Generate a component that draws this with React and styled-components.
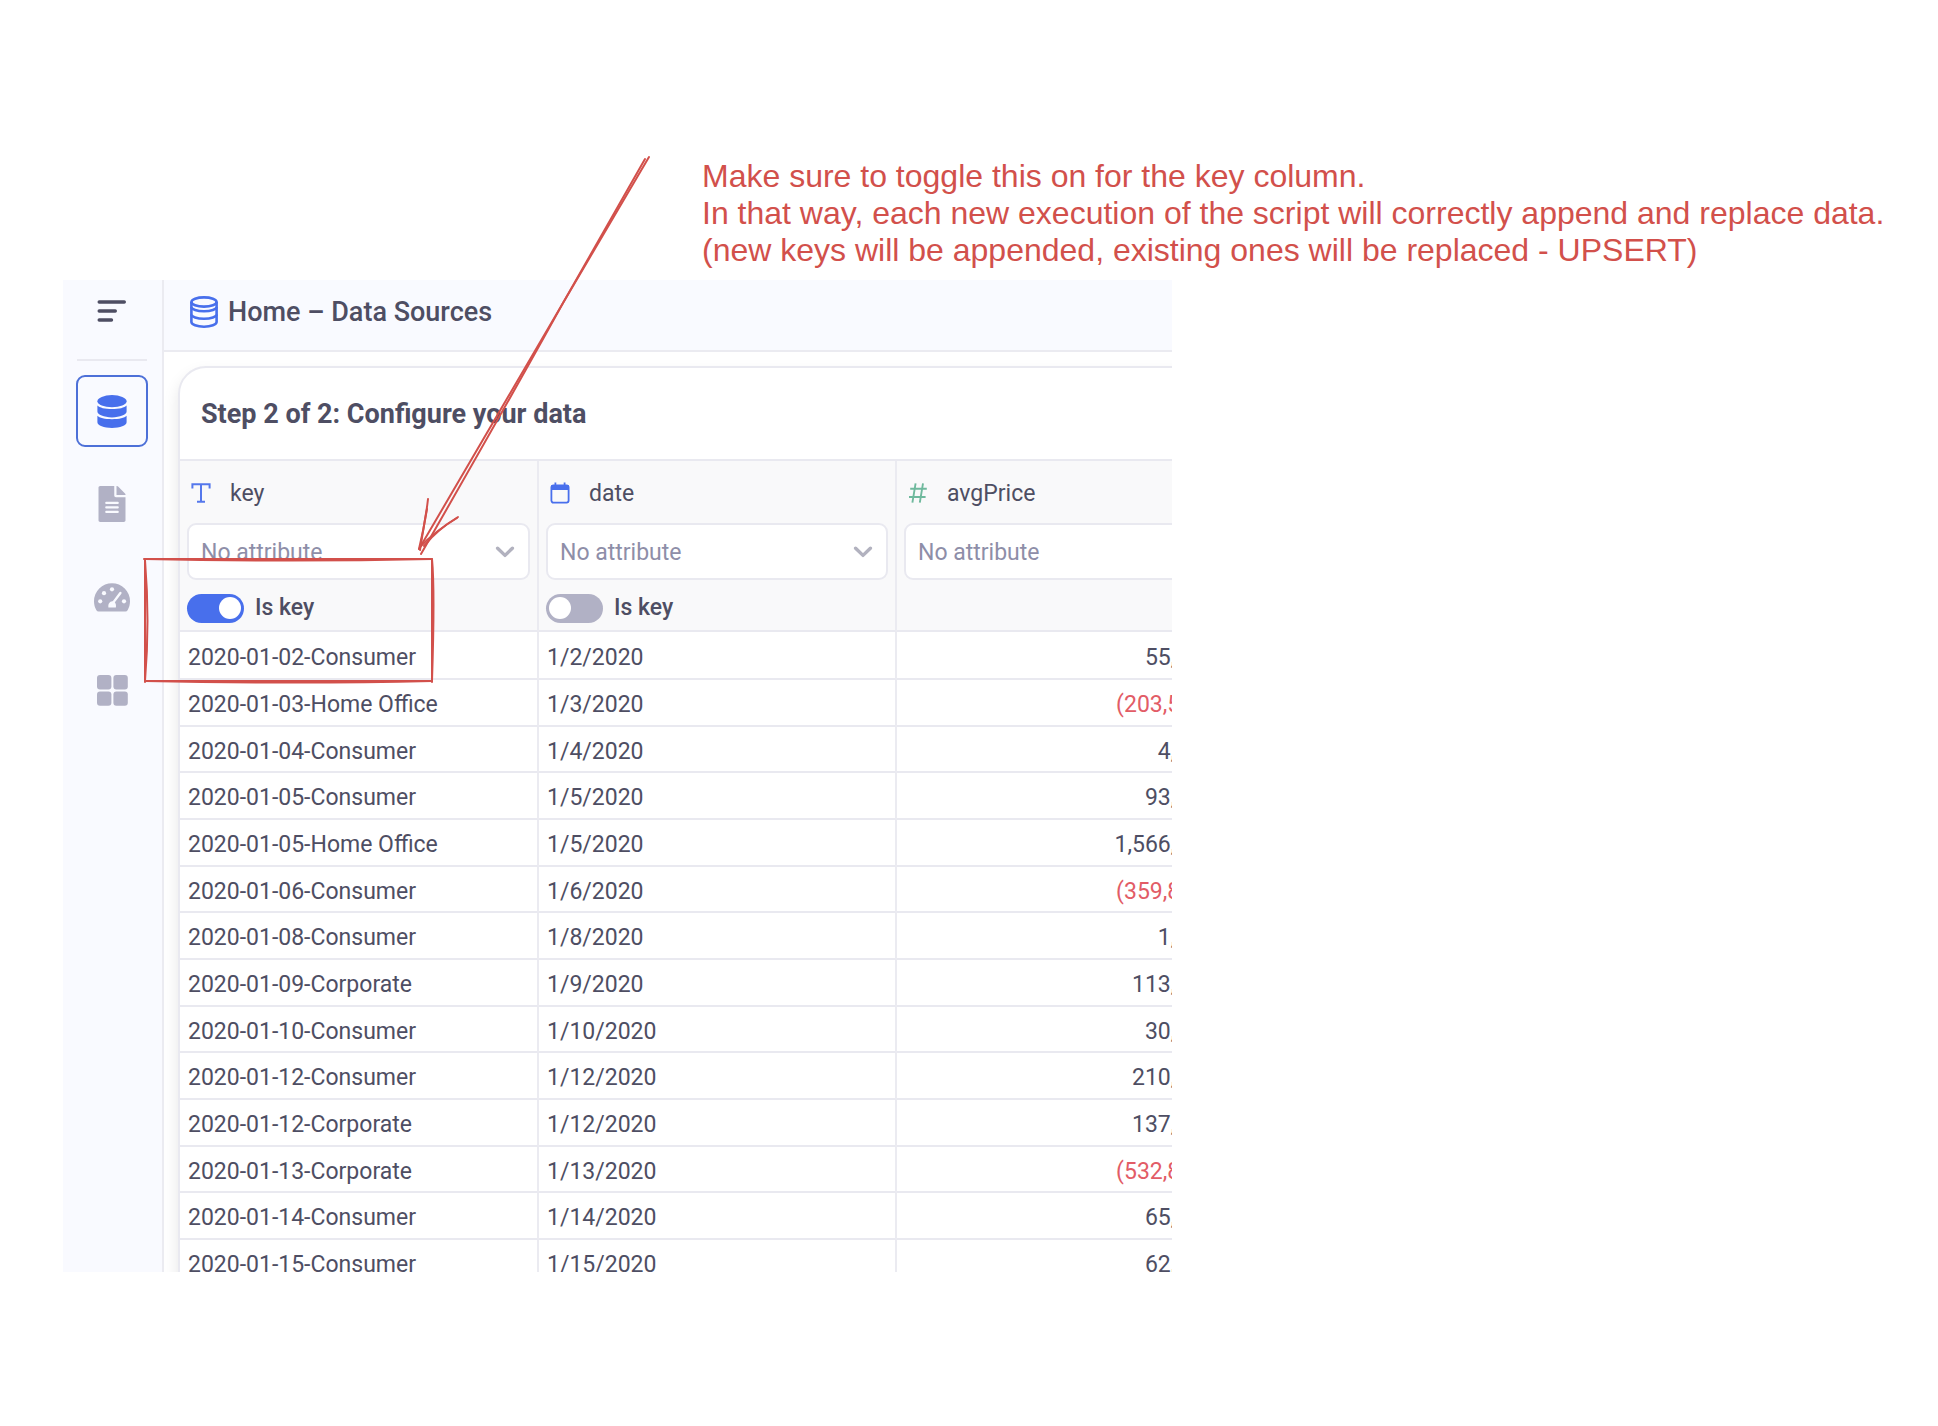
import React, { useState } from "react";
import styled, { createGlobalStyle } from "styled-components";
import { FaFileAlt } from "react-icons/fa";

const rows = [
  { key: "2020-01-02-Consumer", date: "1/2/2020", avgPrice: "55,210.40" },
  { key: "2020-01-03-Home Office", date: "1/3/2020", avgPrice: "(203,514.20)" },
  { key: "2020-01-04-Consumer", date: "1/4/2020", avgPrice: "4,620.00" },
  { key: "2020-01-05-Consumer", date: "1/5/2020", avgPrice: "93,408.60" },
  { key: "2020-01-05-Home Office", date: "1/5/2020", avgPrice: "1,566,204.80" },
  { key: "2020-01-06-Consumer", date: "1/6/2020", avgPrice: "(359,842.00)" },
  { key: "2020-01-08-Consumer", date: "1/8/2020", avgPrice: "1,204.60" },
  { key: "2020-01-09-Corporate", date: "1/9/2020", avgPrice: "113,620.40" },
  { key: "2020-01-10-Consumer", date: "1/10/2020", avgPrice: "30,246.80" },
  { key: "2020-01-12-Consumer", date: "1/12/2020", avgPrice: "210,468.20" },
  { key: "2020-01-12-Corporate", date: "1/12/2020", avgPrice: "137,024.60" },
  { key: "2020-01-13-Corporate", date: "1/13/2020", avgPrice: "(532,860.40)" },
  { key: "2020-01-14-Consumer", date: "1/14/2020", avgPrice: "65,402.00" },
  { key: "2020-01-15-Consumer", date: "1/15/2020", avgPrice: "62,840.20" },
];

const MenuIcon = () => (
  <svg width="30" height="22" viewBox="0 0 30 22" fill="none" stroke="#4e4e63" strokeWidth="3.4" strokeLinecap="round">
    <path d="M2.2 2H27.3M2.2 11H18.3M2.2 20H14.5" />
  </svg>
);

const DatabaseSolid = () => (
  <svg width="30" height="33" viewBox="0 0 30 33" fill="currentColor">
    <ellipse cx="15" cy="6.2" rx="14.6" ry="6.1" />
    <path d="M.4 10.4C2.4 12.6 8 14 15 14S27.6 12.6 29.6 10.4V16.6C29.6 19.8 23 22.4 15 22.4S.4 19.8 .4 16.6Z" />
    <path d="M.4 20.8C2.4 23 8 24.2 15 24.2S27.6 23 29.6 20.8V27.2C29.6 30.4 23 32.9 15 32.9S.4 30.4 .4 27.2Z" />
  </svg>
);

const GaugeIcon = () => (
  <svg width="36" height="29" viewBox="0 0 36 29" fill="currentColor">
    <path d="M18 .2A18 18 0 0 1 36 18.2C36 21.4 35.2 24.4 33.6 27.2Q32.9 28.6 31.4 28.6H4.6Q3.1 28.6 2.4 27.2C.8 24.4 0 21.4 0 18.2A18 18 0 0 1 18 .2Z" />
    <g fill="#f9faff">
      <circle cx="6.2" cy="18.3" r="2.1" />
      <circle cx="10" cy="10.2" r="2.1" />
      <circle cx="18" cy="6.3" r="2.1" />
      <circle cx="30" cy="18.3" r="2.1" />
      <path d="M14.4 24.4C13.8 21 15.6 18.4 18.4 18.2C20.8 18.2 22.6 21 21.8 24.4Z" />
    </g>
    <path d="M18.6 20.4L26.4 10" stroke="#f9faff" strokeWidth="2.4" strokeLinecap="round" />
  </svg>
);

const GridIcon = () => (
  <svg width="31" height="31" viewBox="0 0 31 31" fill="currentColor">
    <rect x="0" y="0" width="14.4" height="14.4" rx="3" />
    <rect x="16.4" y="0" width="14.4" height="14.4" rx="3" />
    <rect x="0" y="16.4" width="14.4" height="14.4" rx="3" />
    <rect x="16.4" y="16.4" width="14.4" height="14.4" rx="3" />
  </svg>
);

const DatabaseOutline = () => (
  <svg width="28" height="32" viewBox="0 0 28 32" fill="none" stroke="#486fec" strokeWidth="2.6">
    <ellipse cx="14" cy="6" rx="12.6" ry="4.6" />
    <path d="M1.4 6V26C1.4 28.6 7 30.7 14 30.7S26.6 28.6 26.6 26V6" />
    <path d="M1.4 11C1.4 13.3 7 15.2 14 15.2S26.6 13.3 26.6 11" />
    <path d="M1.4 18.6C1.4 20.9 7 22.8 14 22.8S26.6 20.9 26.6 18.6" />
  </svg>
);

const TextIcon = () => (
  <svg width="20" height="22" viewBox="0 0 20 22" fill="none" stroke="#5578ec" strokeWidth="2">
    <path d="M1.4 6.4V2.2H18.6V6.4M10 2.2V19.8M6 19.8H14" />
  </svg>
);

const CalendarIcon = () => (
  <svg width="20" height="22" viewBox="0 0 20 22" fill="none" stroke="#486fec">
    <rect x="1.4" y="3.4" width="17.2" height="17.2" rx="2" strokeWidth="1.8" />
    <path d="M1.4 5.6H18.6" strokeWidth="5" />
    <path d="M5.4 .4V4M14.6 .4V4" strokeWidth="1.8" />
  </svg>
);

const HashIcon = () => (
  <svg width="20" height="22" viewBox="0 0 20 22" fill="none" stroke="#6fb99d" strokeWidth="1.9">
    <path d="M7.6 1.4L4.4 20.6M15 1.4L11.8 20.6M2.2 6.8H18.8M1 15H17.6" />
  </svg>
);

const Chevron = () => (
  <svg width="20" height="12" viewBox="0 0 20 12" fill="none" stroke="#b2b2bf" strokeWidth="3.4" strokeLinecap="round" strokeLinejoin="round">
    <path d="M2.6 2.2L10 9.4L17.4 2.2" />
  </svg>
);

const columns = [
  { name: "key", icon: <TextIcon />, canBeKey: true },
  { name: "date", icon: <CalendarIcon />, canBeKey: true },
  { name: "avgPrice", icon: <HashIcon />, canBeKey: false },
];

const menu = [
  { label: "Data sources", icon: <DatabaseSolid /> },
  { label: "Documents", icon: <FaFileAlt size={36} /> },
  { label: "Dashboards", icon: <GaugeIcon /> },
  { label: "Apps", icon: <GridIcon /> },
];

const App = () => {
  const [keys, setKeys] = useState({ key: true, date: false });
  const [active, setActive] = useState("Data sources");

  const toggleKey = (name) => {
    setKeys({ ...keys, [name]: !keys[name] });
  };

  return (
    <Board>
      <GlobalStyle />
      <Note>
        Make sure to toggle this on for the key column.
        <br />
        In that way, each new execution of the script will correctly append and replace data.
        <br />
        (new keys will be appended, existing ones will be replaced - UPSERT)
      </Note>

      <Stage>
        <Panel>
          <Sidebar>
            <MenuButton type="button" aria-label="Menu">
              <MenuIcon />
            </MenuButton>
            <Divider />
            {menu.map((item) => (
              <NavButton
                key={item.label}
                type="button"
                aria-label={item.label}
                $active={item.label === active}
                onClick={() => setActive(item.label)}
              >
                {item.icon}
              </NavButton>
            ))}
          </Sidebar>

          <Main>
            <TopBar>
              <DatabaseOutline />
              <h1>Home – Data Sources</h1>
            </TopBar>
            <Card>
              <CardTitle>Step 2 of 2: Configure your data</CardTitle>
              <Table>
                <colgroup>
                  <Col $width={359} />
                  <Col $width={358} />
                  <Col $width={358} />
                </colgroup>
                <thead>
                  <tr>
                    {columns.map((column) => (
                      <HeadCell key={column.name} scope="col">
                        <ColumnName>
                          {column.icon}
                          <span>{column.name}</span>
                        </ColumnName>
                        <SelectBox>
                          <select aria-label={`Attribute of ${column.name}`}>
                            <option>No attribute</option>
                          </select>
                          <Chevron />
                        </SelectBox>
                        {column.canBeKey && (
                          <ToggleLabel>
                            <Toggle
                              type="checkbox"
                              checked={keys[column.name]}
                              onChange={() => toggleKey(column.name)}
                            />
                            Is key
                          </ToggleLabel>
                        )}
                      </HeadCell>
                    ))}
                  </tr>
                </thead>
                <tbody>
                  {rows.map((row) => (
                    <Row key={row.key}>
                      <Cell>{row.key}</Cell>
                      <Cell>{row.date}</Cell>
                      <Cell $number $negative={row.avgPrice.startsWith("(")}>
                        {row.avgPrice}
                      </Cell>
                    </Row>
                  ))}
                </tbody>
              </Table>
            </Card>
          </Main>
        </Panel>

        {/* hand drawn arrow and frame round the toggle */}
        <Sketch width="520" height="540" viewBox="140 150 520 540" aria-hidden="true">
          <path d="M645 159L563 303Q510 399 421 554" />
          <path d="M649 157Q600 240 563 303L419 549" />
          <path d="M428 499Q425 525 419 549" />
          <path d="M427 509Q423 530 420 550" />
          <path d="M458 517Q434 532 420 547" />
          <path d="M457 518Q438 529 424 546" />
          <path d="M144 559H432M145 559Q290 562 432 559" />
          <path d="M432 559Q435 590 432 681M432 559V682" />
          <path d="M432 681Q300 684 145 681M432 681H145" />
          <path d="M145 559V682M145 560Q150 622 145 681" />
        </Sketch>
      </Stage>
    </Board>
  );
};

export default App;

const GlobalStyle = createGlobalStyle`
  * {
    box-sizing: border-box;
  }
  body {
    margin: 0;
    background: #fff;
    color: #4e4e63;
    font-family: Roboto, "Liberation Sans", sans-serif;
    font-size: 23px;
  }
  button, select {
    font: inherit;
    color: inherit;
  }
`;

const Board = styled.div`
  display: flex;
  flex-direction: column;
  gap: 11px;
  padding: 158px 0 0 63px;
  overflow: hidden;
`;

const Note = styled.p`
  margin: 0 0 0 639px;
  color: #d2504b;
  font-family: "Liberation Sans", Arial, sans-serif;
  font-size: 32px;
  line-height: 37px;
`;

const Stage = styled.div`
  position: relative;
  width: 100%;
  max-width: 1109px;
`;

const Panel = styled.div`
  display: flex;
  max-height: 992px;
  overflow: hidden;
`;

const Sidebar = styled.nav`
  flex: none;
  display: flex;
  flex-direction: column;
  align-items: center;
  width: 101px;
  padding-right: 1px;
  background: #f9faff;
  border-right: 2px solid #ebebf1;
`;

const MenuButton = styled.button`
  display: flex;
  align-items: center;
  justify-content: center;
  width: 72px;
  height: 61px;
  padding: 0;
  border: none;
  background: none;
  cursor: pointer;
`;

const Divider = styled.hr`
  width: 70px;
  height: 2px;
  margin: 18px 0 14px;
  border: none;
  background: #e9e9f0;
`;

const NavButton = styled.button`
  flex: none;
  display: flex;
  align-items: center;
  justify-content: center;
  width: 72px;
  height: 72px;
  margin-bottom: 21px;
  padding: 0;
  border: 2px solid ${(props) => (props.$active ? "#4d70d8" : "transparent")};
  border-radius: 9px;
  background: none;
  color: ${(props) => (props.$active ? "#486fec" : "#b1b1c5")};
  cursor: pointer;
`;

const Main = styled.main`
  flex: 1;
  min-width: 0;
  overflow: hidden;
`;

const TopBar = styled.header`
  display: flex;
  align-items: center;
  gap: 10px;
  height: 72px;
  padding: 0 26px 6px;
  background: #f9faff;
  border-bottom: 2px solid #ebebf1;

  h1 {
    margin: 0;
    font-size: 27px;
    font-weight: 500;
  }
`;

const Card = styled.section`
  width: max-content;
  margin: 14px 0 0 14px;
  border: 2px solid #e9e9f0;
  border-radius: 28px 0 0 0;
  background: #fff;
  box-shadow: 0 8px 16px rgba(0, 0, 0, 0.1);
  overflow: hidden;
`;

const CardTitle = styled.h2`
  margin: 0;
  padding: 2px 21px 0;
  font-size: 27px;
  font-weight: 700;
  line-height: 89px;
`;

const Table = styled.table`
  table-layout: fixed;
  width: 1075px;
  border-collapse: separate;
  border-spacing: 0;
  border-top: 2px solid #e9e9f0;
`;

const Col = styled.col`
  width: ${(props) => props.$width}px;
`;

const HeadCell = styled.th`
  height: 171px;
  padding: 0 7px;
  border-right: 2px solid #ebebf1;
  border-bottom: 2px solid #e9e9f0;
  background: #f9f9fa;
  font-weight: 400;
  text-align: left;
  vertical-align: top;
`;

const ColumnName = styled.div`
  display: flex;
  align-items: center;
  gap: 19px;
  height: 62px;
  padding: 2px 0 0 4px;
`;

const SelectBox = styled.div`
  display: grid;
  align-items: center;

  select,
  svg {
    grid-area: 1 / 1;
  }
  select {
    appearance: none;
    width: 100%;
    height: 57px;
    padding: 2px 40px 0 12px;
    border: 2px solid #e9e9f0;
    border-radius: 9px;
    background: #fff;
    color: #8e8ea8;
  }
  svg {
    justify-self: end;
    margin-right: 15px;
    pointer-events: none;
  }
`;

const ToggleLabel = styled.label`
  display: inline-flex;
  align-items: center;
  gap: 11px;
  margin-top: 13px;
  font-weight: 500;
  line-height: 30px;
  cursor: pointer;
`;

const Toggle = styled.input`
  appearance: none;
  display: flex;
  align-items: center;
  justify-content: ${(props) => (props.checked ? "flex-end" : "flex-start")};
  width: 57px;
  height: 29px;
  margin: 0;
  padding: 0 3px;
  border-radius: 15px;
  background: ${(props) => (props.checked ? "#486fec" : "#b1b1c5")};
  cursor: pointer;

  &::before {
    content: "";
    width: 22px;
    height: 22px;
    border-radius: 50%;
    background: #fff;
  }
`;

/* 140px for every three rows */
const Row = styled.tr`
  height: 47px;

  &:first-child {
    height: 48px;
  }
  &:nth-child(3n) {
    height: 46px;
  }
`;

const Cell = styled.td`
  padding: 4px 7px 0 8px;
  border-right: 2px solid #ebebf1;
  border-bottom: 2px solid #e9e9f0;
  color: ${(props) => (props.$negative ? "#e25c66" : "#4e4e63")};
  text-align: ${(props) => (props.$number ? "right" : "left")};
  white-space: nowrap;
`;

const Sketch = styled.svg`
  position: absolute;
  left: 77px;
  top: -130px;
  fill: none;
  stroke: #d2504b;
  stroke-width: 2;
  stroke-linecap: round;
  pointer-events: none;
`;
